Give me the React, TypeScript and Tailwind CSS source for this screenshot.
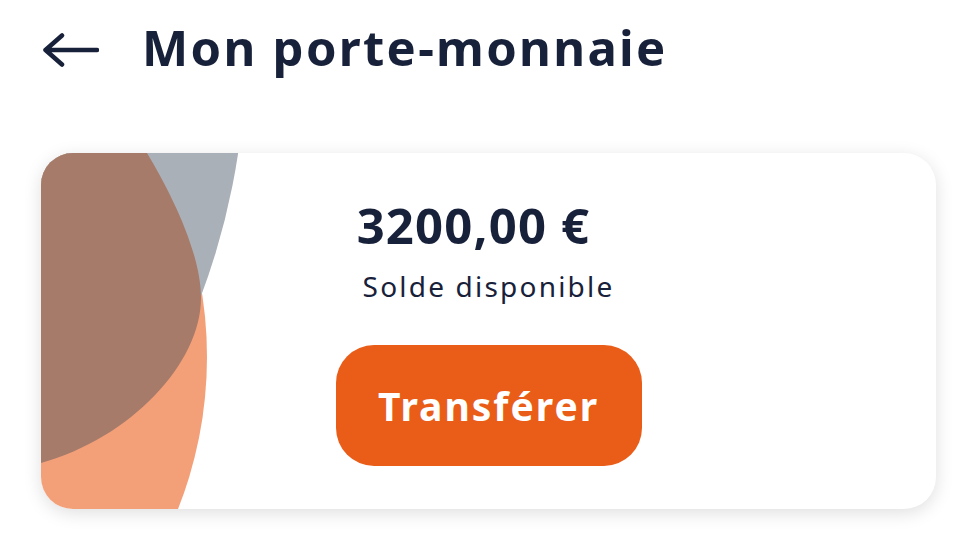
import React from "react";

export default function App() {
  return (
    <div
      className="min-h-[560px] w-[977px] bg-white text-[#18213a]"
      style={{ fontFamily: '"Noto Sans", "Open Sans", sans-serif' }}
    >
      <header className="flex items-center pl-[43px] pt-[23px]">
        <svg width="56" height="34" viewBox="0 0 56 34" className="mt-[4px]" fill="none">
          <path
            d="M2.5 17 H54 M19 2.5 L2.5 17 L19 31.5"
            stroke="#18213a"
            strokeWidth="4.5"
            strokeLinecap="round"
            strokeLinejoin="round"
          />
        </svg>
        <h1 className="ml-[43px] text-[49px] font-bold leading-none tracking-[2.3px]">
          Mon porte-monnaie
        </h1>
      </header>

      <div className="px-[41px] pt-[81px]">
        <div className="relative h-[356px] w-[895px] overflow-hidden rounded-[32px] bg-white shadow-[0_4px_18px_rgba(0,0,0,0.13)]">
          <svg
            className="absolute left-0 top-0"
            width="300"
            height="356"
            viewBox="0 0 300 356"
          >
            <defs>
              <clipPath id="grayClip">
                <rect x="-20" y="-20" width="320" height="164" />
              </clipPath>
            </defs>
            <circle cx="-247" cy="204" r="413" fill="#f3a079" />
            <circle cx="-501" cy="-105" r="706" fill="#aab0b8" clipPath="url(#grayClip)" />
            <path
              d="M106 0 C130 40 160 100 160 145 C160 210 90 285 0 310 L-20 312 L-20 -20 L95 -20 Z"
              fill="#a67b6a"
            />
          </svg>
          <div className="relative flex flex-col items-center pt-[48px]">
            <div className="mr-[30px] text-[49px] font-bold leading-none tracking-[1.2px]">3200,00 €</div>
            <div className="mt-[22px] text-[28px] leading-none tracking-[2.2px]">Solde disponible</div>
            <button className="mt-[45px] flex h-[121px] w-[306px] items-center justify-center rounded-[38px] bg-[#e95d19] text-[39px] font-bold leading-none tracking-[2px] text-white">
              Transférer
            </button>
          </div>
        </div>
      </div>
    </div>
  );
}
